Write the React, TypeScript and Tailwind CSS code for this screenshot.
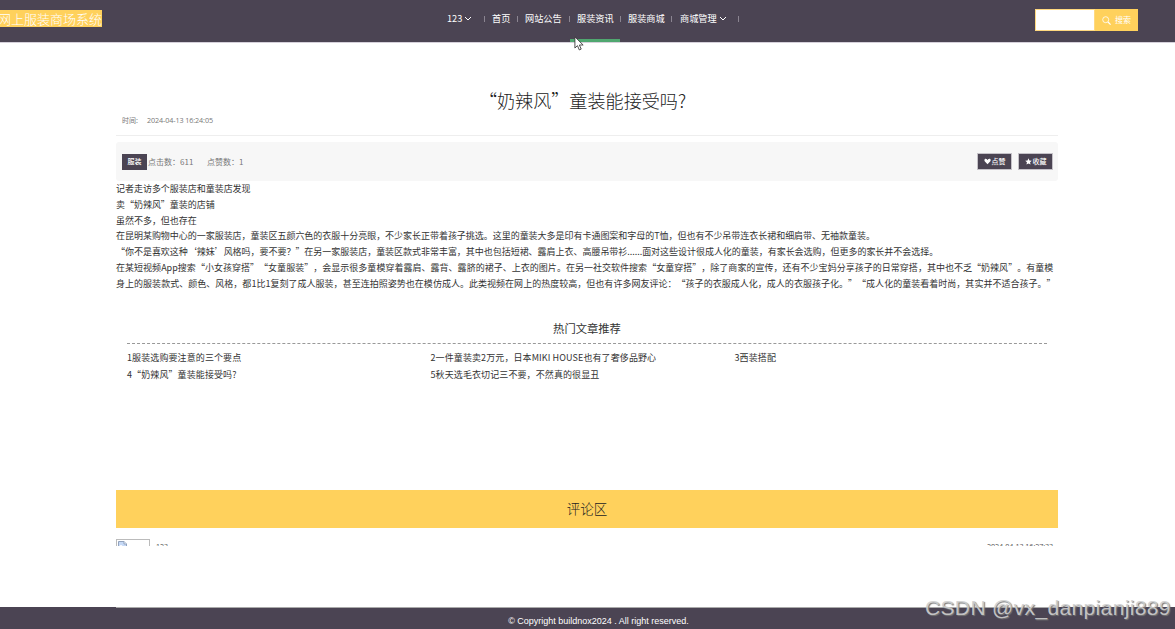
import type { ReactNode } from 'react';

interface NavItem {
    label: string;
    width: string;
    dropdown?: boolean;
    active?: boolean;
}

const navItems: NavItem[] = [
    { label: '123', width: 'w-[38px]', dropdown: true },
    { label: '首页', width: 'w-[33px] pl-[7px]' },
    { label: '网站公告', width: 'w-[52px] pl-[7px]' },
    { label: '服装资讯', width: 'w-[51px] pl-[7px]', active: true },
    { label: '服装商城', width: 'w-[51px] pl-[7px]' },
    { label: '商城管理', width: 'w-[67px] pl-[8px]', dropdown: true },
];

const paragraphs = [
    '记者走访多个服装店和童装店发现',
    '卖“奶辣风”童装的店铺',
    '虽然不多，但也存在',
    '在昆明某购物中心的一家服装店，童装区五颜六色的衣服十分亮眼，不少家长正带着孩子挑选。这里的童装大多是印有卡通图案和字母的T恤，但也有不少吊带连衣长裙和细肩带、无袖款童装。',
    '“你不是喜欢这种‘辣妹’风格吗，要不要？”在另一家服装店，童装区款式非常丰富，其中也包括短裙、露肩上衣、高腰吊带衫......面对这些设计很成人化的童装，有家长会选购，但更多的家长并不会选择。',
    '在某短视频App搜索“小女孩穿搭”“女童服装”，会显示很多童模穿着露肩、露背、露脐的裙子、上衣的图片。在另一社交软件搜索“女童穿搭”，除了商家的宣传，还有不少宝妈分享孩子的日常穿搭，其中也不乏“奶辣风”。有童模',
    '身上的服装款式、颜色、风格，都1比1复刻了成人服装，甚至连拍照姿势也在模仿成人。此类视频在网上的热度较高，但也有许多网友评论：“孩子的衣服成人化，成人的衣服孩子化。”“成人化的童装看着时尚，其实并不适合孩子。”',
];

const hotArticles = [
    '1服装选购要注意的三个要点',
    '2一件童装卖2万元，日本MIKI HOUSE也有了奢侈品野心',
    '3西装搭配',
    '4“奶辣风”童装能接受吗?',
    '5秋天选毛衣切记三不要，不然真的很显丑',
];

function Chevron() {
    return (
        <svg className="ml-[2px] h-[5px] w-[8px]" viewBox="0 0 8 5" fill="none" stroke="currentColor">
            <path d="M1 1l3 3 3-3" />
        </svg>
    );
}

function Header() {
    return (
        <header className="flex h-[43px] border-b border-[#d5d0da] bg-[#4b4453] text-white">
            <div className="w-[447px] pt-[10px]">
                <span className="-ml-[2px] inline-block h-[17px] w-[104px] bg-[#ffd15c] align-top text-[13px] leading-[17px] font-light whitespace-nowrap">
                    网上服装商场系统
                </span>
            </div>
            <nav className="flex w-[588px]">
                {navItems.map((item) => (
                    <div key={item.label} className={`relative flex h-[37px] shrink-0 items-center text-[9.2px] whitespace-nowrap ${item.width}`}>
                        {item.label}
                        {item.dropdown && <Chevron />}
                        <span className="absolute top-[16px] right-0 h-[6px] w-px bg-[#8b8591]" />
                        {item.active && <span className="absolute top-[39px] left-0 h-[3px] w-[50px] bg-[#50a770]" />}
                    </div>
                ))}
            </nav>
            <form className="mt-[9px] flex h-[22px]">
                <input className="w-[60px] border border-[#ffd980] bg-white" aria-label="搜索" />
                <button type="button" className="flex w-[43px] items-center justify-center gap-[4px] bg-[#ffd15c] text-[8px]">
                    <svg className="h-[9px] w-[9px]" viewBox="0 0 9 9" fill="none" stroke="currentColor">
                        <circle cx="3.7" cy="3.7" r="3" strokeWidth=".8" />
                        <path d="M6 6l2.6 2.6" strokeWidth="1.2" />
                    </svg>
                    搜索
                </button>
            </form>
        </header>
    );
}

function ActionButton({ icon, children }: { icon: ReactNode; children: ReactNode }) {
    return (
        <button type="button" className="flex h-[17px] w-[35px] items-center justify-center gap-px border border-[#c5c2c8] bg-[#4b4453] text-[7px] font-medium text-white">
            <svg className="h-[7px] w-[7px]" viewBox="0 0 24 24" fill="currentColor">
                {icon}
            </svg>
            {children}
        </button>
    );
}

function Article() {
    return (
        <article className="h-[234px]">
            <h1 className="pt-[2px] pr-[9px] text-center text-[18.1px] leading-[26px] font-light text-[#222]">“奶辣风”童装能接受吗?</h1>
            <div className="flex h-[23px] border-b border-[#eee] pl-[6px] text-[7px] leading-[14px] text-[#777]">
                <span className="w-[25px]">时间:</span>
                <span className="font-['Open_Sans'] text-[7.2px] tracking-[-0.1px]">2024-04-13 16:24:05</span>
            </div>
            <div className="mt-[6px] flex h-[39px] items-center rounded-[3px] bg-[#f7f7f7] pr-[5px] pl-[6px] text-[8px] text-[#777]">
                <span className="flex h-[16px] w-[25px] items-center justify-center bg-[#4b4453] text-[7px] font-medium text-white">服装</span>
                <span className="ml-px w-[59px] whitespace-nowrap">点击数：611</span>
                <span className="whitespace-nowrap">点赞数：1</span>
                <div className="ml-auto flex gap-[6px]">
                    <ActionButton icon={<path d="M12 21L3 12C-1 7 3 2 7 3c2 0 4 2 5 4 1-2 3-4 5-4 5-1 8 4 4 9z" />}>点赞</ActionButton>
                    <ActionButton icon={<path d="M12 1l3.3 7.4 8 .8-6 5.4 1.7 8-7-4.1-7 4.1 1.7-8-6-5.4 8-.8z" />}>收藏</ActionButton>
                </div>
            </div>
            <div className="text-[9px] leading-[15.75px] whitespace-nowrap text-[#333]">
                {paragraphs.map((text, i) => (
                    <p key={text} className={i > 4 ? 'tracking-[0.025px]' : 'tracking-[-0.03px]'}>
                        {text}
                    </p>
                ))}
            </div>
        </article>
    );
}

function HotArticles() {
    return (
        <section className="mx-[11px] h-[109px] text-[#333]">
            <h2 className="h-[25px] border-b border-dashed border-[#999] text-center text-[11.3px] leading-[19px]">热门文章推荐</h2>
            <ul className="grid grid-cols-[303.5px_304px_1fr] pt-[5px] text-[9px] leading-[17px] tracking-[0.1px] whitespace-nowrap">
                {hotArticles.map((title) => (
                    <li key={title}>{title}</li>
                ))}
            </ul>
        </section>
    );
}

function Comments() {
    return (
        <section className="mt-[62px]">
            <h2 className="h-[38px] bg-[#ffd15c] text-center text-[13.5px] leading-[37px] font-light text-[#222]">评论区</h2>
            <div className="mt-[11px] flex h-[7px] overflow-hidden text-[7px] text-[#555]">
                <div className="h-[34px] w-[34px] shrink-0 border border-[#bbb] pt-px pl-px">
                    <svg className="h-[10px] w-[9px]" viewBox="0 0 9 10">
                        <path d="M.5.5h5.5l2.5 2.5v6.5h-8z" fill="#c6d9f6" stroke="#91a2bd" />
                        <path d="M6 .5v2.500h2.500" fill="#fff" stroke="#91a2bd" />
                        <path d="M1.500 5q1.500-2 3 0z" fill="#fff" />
                    </svg>
                </div>
                <span className="ml-[6px] pt-[3px] font-['Open_Sans'] leading-[10px]">123</span>
                <span className="mr-[5px] ml-auto pt-[3px] font-['Open_Sans'] text-[7.2px] leading-[9px] tracking-[-0.1px]">2024-04-13 16:27:33</span>
            </div>
        </section>
    );
}

export default function App() {
    return (
        <div lang="zh-CN" className="relative h-[629px] w-[1175px] overflow-hidden bg-white font-['Noto_Sans_CJK_SC',sans-serif] [text-spacing-trim:space-all]">
            <Header />
            <main className="mx-[116px] h-[564px] w-[942px] pt-[42px]">
                <Article />
                <HotArticles />
                <Comments />
            </main>
            <footer className="h-[22px] bg-[#4b4453]">
                <div className="mx-[116px] h-[22px] w-[942px] border-t border-[#aaa] pl-[23px] text-center font-['Liberation_Sans'] text-[9px] leading-[27px] text-white">
                    © Copyright buildnox2024 . All right reserved.
                </div>
            </footer>

            {/* Watermark */}
            <div className="absolute top-[595px] left-[925px] font-['Liberation_Sans'] text-[21px] leading-[26px] tracking-[0.35px] whitespace-nowrap text-[#d0d0d0]/90 [text-shadow:1px_1px_1px_#777]">
                CSDN @vx_danpianji889
            </div>

            {/* Mouse pointer */}
            <svg className="absolute top-[36px] left-[574px] h-[15px] w-[11px]" viewBox="0 0 10 14">
                <path d="M.7.8v10.4l2.4-2.2 1.7 4 1.8-.8-1.7-3.8h3.5z" fill="#fff" stroke="#333" strokeWidth=".8" />
            </svg>
        </div>
    );
}
